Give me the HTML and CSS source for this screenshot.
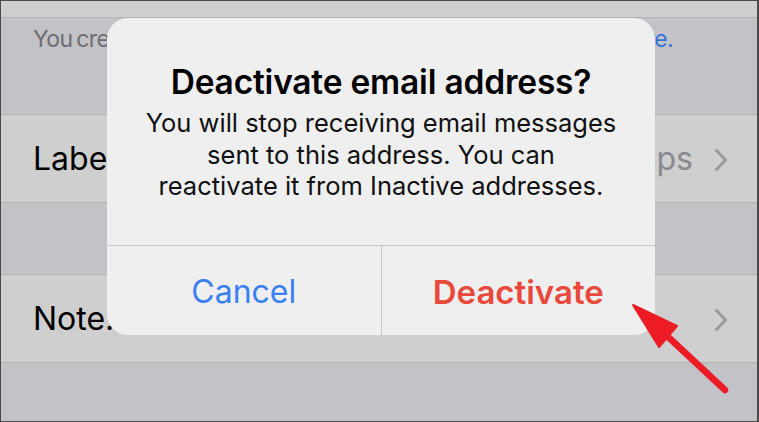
FILE: index.html
```html
<!DOCTYPE html>
<html>
<head>
<meta charset="utf-8">
<link rel="stylesheet" href="styles.css">
</head>
<body>
<div class="screen">
  <div class="row top-strip"></div>
  <div class="group footer-group">
    <p class="footer-text">You created this address to use with Hide My Email. <span class="link">Learn more.</span></p>
  </div>
  <div class="row cell">
    <span class="cell-label">Label</span>
    <span class="cell-value">Apps</span>
    <span class="chev">
      <svg width="14" height="24" viewBox="0 0 14 24"><path d="M2.5 2.5 L11.5 12 L2.5 21.5" fill="none" stroke="#9b9b9e" stroke-width="3" stroke-linecap="round" stroke-linejoin="round"/></svg>
    </span>
  </div>
  <div class="group gap-group"></div>
  <div class="row cell note-row">
    <span class="cell-label">Note...</span>
    <span class="cell-value"></span>
    <span class="chev">
      <svg width="14" height="24" viewBox="0 0 14 24"><path d="M2.5 2.5 L11.5 12 L2.5 21.5" fill="none" stroke="#9b9b9e" stroke-width="3" stroke-linecap="round" stroke-linejoin="round"/></svg>
    </span>
  </div>
  <div class="group bottom-group"></div>

  <div class="alert">
    <div class="alert-body">
      <h1 class="alert-title">Deactivate email address?</h1>
      <p class="alert-msg">You will stop receiving email messages<br>sent to this address. You can<br>reactivate it from Inactive addresses.</p>
    </div>
    <div class="alert-actions">
      <div class="btn btn-cancel">Cancel</div>
      <div class="btn btn-destructive">Deactivate</div>
    </div>
  </div>

  <svg class="arrow" width="120" height="110" viewBox="0 0 120 110">
    <line x1="38" y1="36" x2="98" y2="92" stroke="#ed1c24" stroke-width="6.5" stroke-linecap="round"/>
    <polygon points="6,7 50,28 32,49" fill="#ed1c24" stroke="#ed1c24" stroke-width="2" stroke-linejoin="round"/>
  </svg>
</div>
</body>
</html>
```

FILE: styles.css
```css
* { box-sizing: border-box; }
html, body { margin: 0; padding: 0; }
body {
  width: 759px;
  height: 422px;
  overflow: hidden;
  background: #4a4a4c;
  font-family: Inter, "Open Sans", "Liberation Sans", sans-serif;
}
.screen {
  position: relative;
  margin: 1px 2px 1px 1px;
  height: 420px;
  display: flex;
  flex-direction: column;
  background: #c3c2c7;
  overflow: hidden;
}
.row {
  background: #cfcfcf;
  border-bottom: 1.5px solid #b3b3b6;
}
.top-strip { height: 17px; }
.group { background: #c3c2c7; }
.footer-group {
  height: 97px;
  border-bottom: 1.5px solid #b3b3b6;
}
.footer-text {
  margin: 0;
  padding: 7px 0 0 32px;
  font-size: 23px;
  color: #6d6d71;
  white-space: nowrap;
  letter-spacing: -0.6px;
  word-spacing: -2px;
}
.link { color: #3474d9; }
.cell {
  height: 88px;
  display: flex;
  align-items: center;
  padding: 0 29px 0 32px;
}
.cell-label {
  font-size: 32px;
  color: #000;
  flex: 1;
}
.cell-value {
  font-size: 32px;
  color: #8a8a8e;
  margin-right: 21px;
}
.chev { display: flex; align-items: center; padding-top: 2px; }
.gap-group {
  height: 72px;
  border-bottom: 1.5px solid #b3b3b6;
}
.note-row { height: 88px; }
.bottom-group { flex: 1; }

.alert {
  position: absolute;
  left: 106px;
  top: 17px;
  width: 548px;
  height: 317px;
  background: #efeff0;
  border-radius: 21px;
  display: flex;
  flex-direction: column;
  overflow: hidden;
}
.alert-body {
  height: 228px;
  border-bottom: 1.5px solid #c6c6c9;
  padding: 43px 10px 0;
  text-align: center;
}
.alert-title {
  margin: 0;
  font-size: 33.5px;
  font-weight: 600;
  line-height: 42px;
  color: #000;
  letter-spacing: -0.2px;
}
.alert-msg {
  margin: 4px 0 0;
  font-size: 25.5px;
  line-height: 31.5px;
  color: #111;
  white-space: nowrap;
}
.alert-actions {
  flex: 1;
  display: flex;
}
.btn {
  flex: 1 1 0;
  display: flex;
  align-items: center;
  justify-content: center;
  font-size: 32px;
  padding-top: 2px;
}
.btn-cancel {
  color: #3a80f5;
  border-right: 1.5px solid #c6c6c9;
}
.btn-destructive {
  color: #e9493b;
  font-weight: 600;
  font-size: 33px;
}
.arrow {
  position: absolute;
  left: 626px;
  top: 297px;
}
```
